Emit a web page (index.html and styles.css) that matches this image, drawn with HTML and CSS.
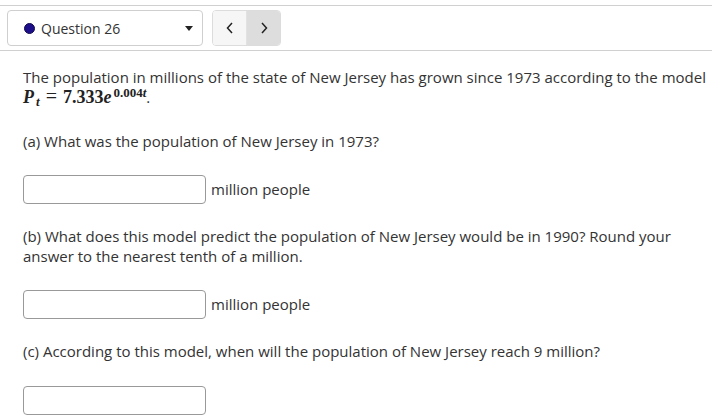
FILE: index.html
```html
<!DOCTYPE html>
<html>
<head>
<meta charset="utf-8">
<link rel="stylesheet" href="styles.css">
</head>
<body>
<div class="header">
  <div class="select">
    <span class="dot"></span>
    <span class="label">Question 26</span>
    <svg class="caret" width="8" height="5" viewBox="0 0 8 5"><polygon points="0,0 8,0 4,5" fill="#222"/></svg>
  </div>
  <div class="nav">
    <div class="navbtn prev"><svg width="8" height="12" viewBox="0 0 8 12"><polyline points="6,1 1.5,6 6,11" fill="none" stroke="#222" stroke-width="1.5"/></svg></div>
    <div class="navbtn next"><svg width="8" height="12" viewBox="0 0 8 12"><polyline points="2,1 6.5,6 2,11" fill="none" stroke="#222" stroke-width="1.5"/></svg></div>
  </div>
</div>
<div class="content">
  <p class="para first">The population in millions of the state of New Jersey has grown since 1973 according to the model<br><span class="math"><i>P</i><span class="sub"><i>t</i></span><span class="eq">=</span>7.333<i>e</i><span class="sup">0.004<i>t</i></span></span>.</p>
  <p class="para">(a) What was the population of New Jersey in 1973?</p>
  <div class="answer"><span class="box"></span><span class="unit">million people</span></div>
  <p class="para next-q">(b) What does this model predict the population of New Jersey would be in 1990? Round your answer to the nearest tenth of a million.</p>
  <div class="answer"><span class="box"></span><span class="unit">million people</span></div>
  <p class="para next-q">(c) According to this model, when will the population of New Jersey reach 9 million?</p>
  <div class="answer last"><span class="box"></span></div>
</div>
</body>
</html>
```
FILE: styles.css
```css
html, body {
  margin: 0;
  padding: 0;
  background: #fff;
}
body {
  font-family: "Open Sans", "Liberation Sans", sans-serif;
  font-size: 15px;
  color: #333;
}
.header {
  margin-top: 5px;
  width: 712px;
  box-sizing: border-box;
  border-top: 1px solid #d0d0d0;
  border-bottom: 1px solid #d0d0d0;
  padding: 4px 7px 4px 7px;
  display: flex;
  gap: 9px;
}
.select {
  width: 196px;
  height: 36px;
  box-sizing: border-box;
  border: 1px solid #cfcfcf;
  border-radius: 4px;
  display: flex;
  align-items: center;
  padding-left: 16px;
  padding-right: 9px;
  font-size: 14px;
}
.dot {
  width: 11px;
  height: 11px;
  border-radius: 50%;
  background: #1d0f8a;
  border: 1px solid #10084f;
  box-sizing: border-box;
  margin-right: 6px;
}
.label {
  flex: 1;
  color: #333;
}
.caret {
  display: block;
}
.nav {
  display: flex;
  height: 36px;
  border: 1px solid #dcdcdc;
  border-radius: 4px;
  overflow: hidden;
  box-sizing: border-box;
}
.navbtn {
  width: 33px;
  display: flex;
  align-items: center;
  justify-content: center;
}
.prev {
  background: #f6f6f6;
  border-right: 1px solid #e2e2e2;
}
.next {
  background: #dddddd;
}
.content {
  padding: 0 2px 0 23px;
}
.para {
  margin: 0;
  line-height: 20px;
  padding-top: 24px;
  max-width: 660px;
}
.para.next-q {
  padding-top: 22px;
}
.para.first {
  padding-top: 16px;
  max-width: none;
}
.math {
  font-family: "Liberation Serif", "DejaVu Serif", serif;
  font-size: 18px;
  font-weight: bold;
  color: #222;
}
.math .sub {
  display: inline-block;
  font-size: 13px;
  vertical-align: -3px;
  line-height: 10px;
  margin-left: 2px;
}
.math .eq {
  display: inline-block;
  margin: 0 6px 0 6px;
  font-weight: normal;
  font-size: 20px;
  line-height: 10px;
}
.math .sup {
  display: inline-block;
  font-size: 13px;
  vertical-align: 6px;
  line-height: 10px;
  margin-left: 2px;
}
.answer {
  display: flex;
  align-items: center;
  margin-top: 24px;
  height: 29px;
}
.answer.last {
  margin-top: 25px;
}
.box {
  width: 183px;
  height: 29px;
  box-sizing: border-box;
  border: 1px solid #999;
  border-radius: 4px;
  background: #fff;
}
.unit {
  margin-left: 5px;
  margin-top: -2px;
}
```
